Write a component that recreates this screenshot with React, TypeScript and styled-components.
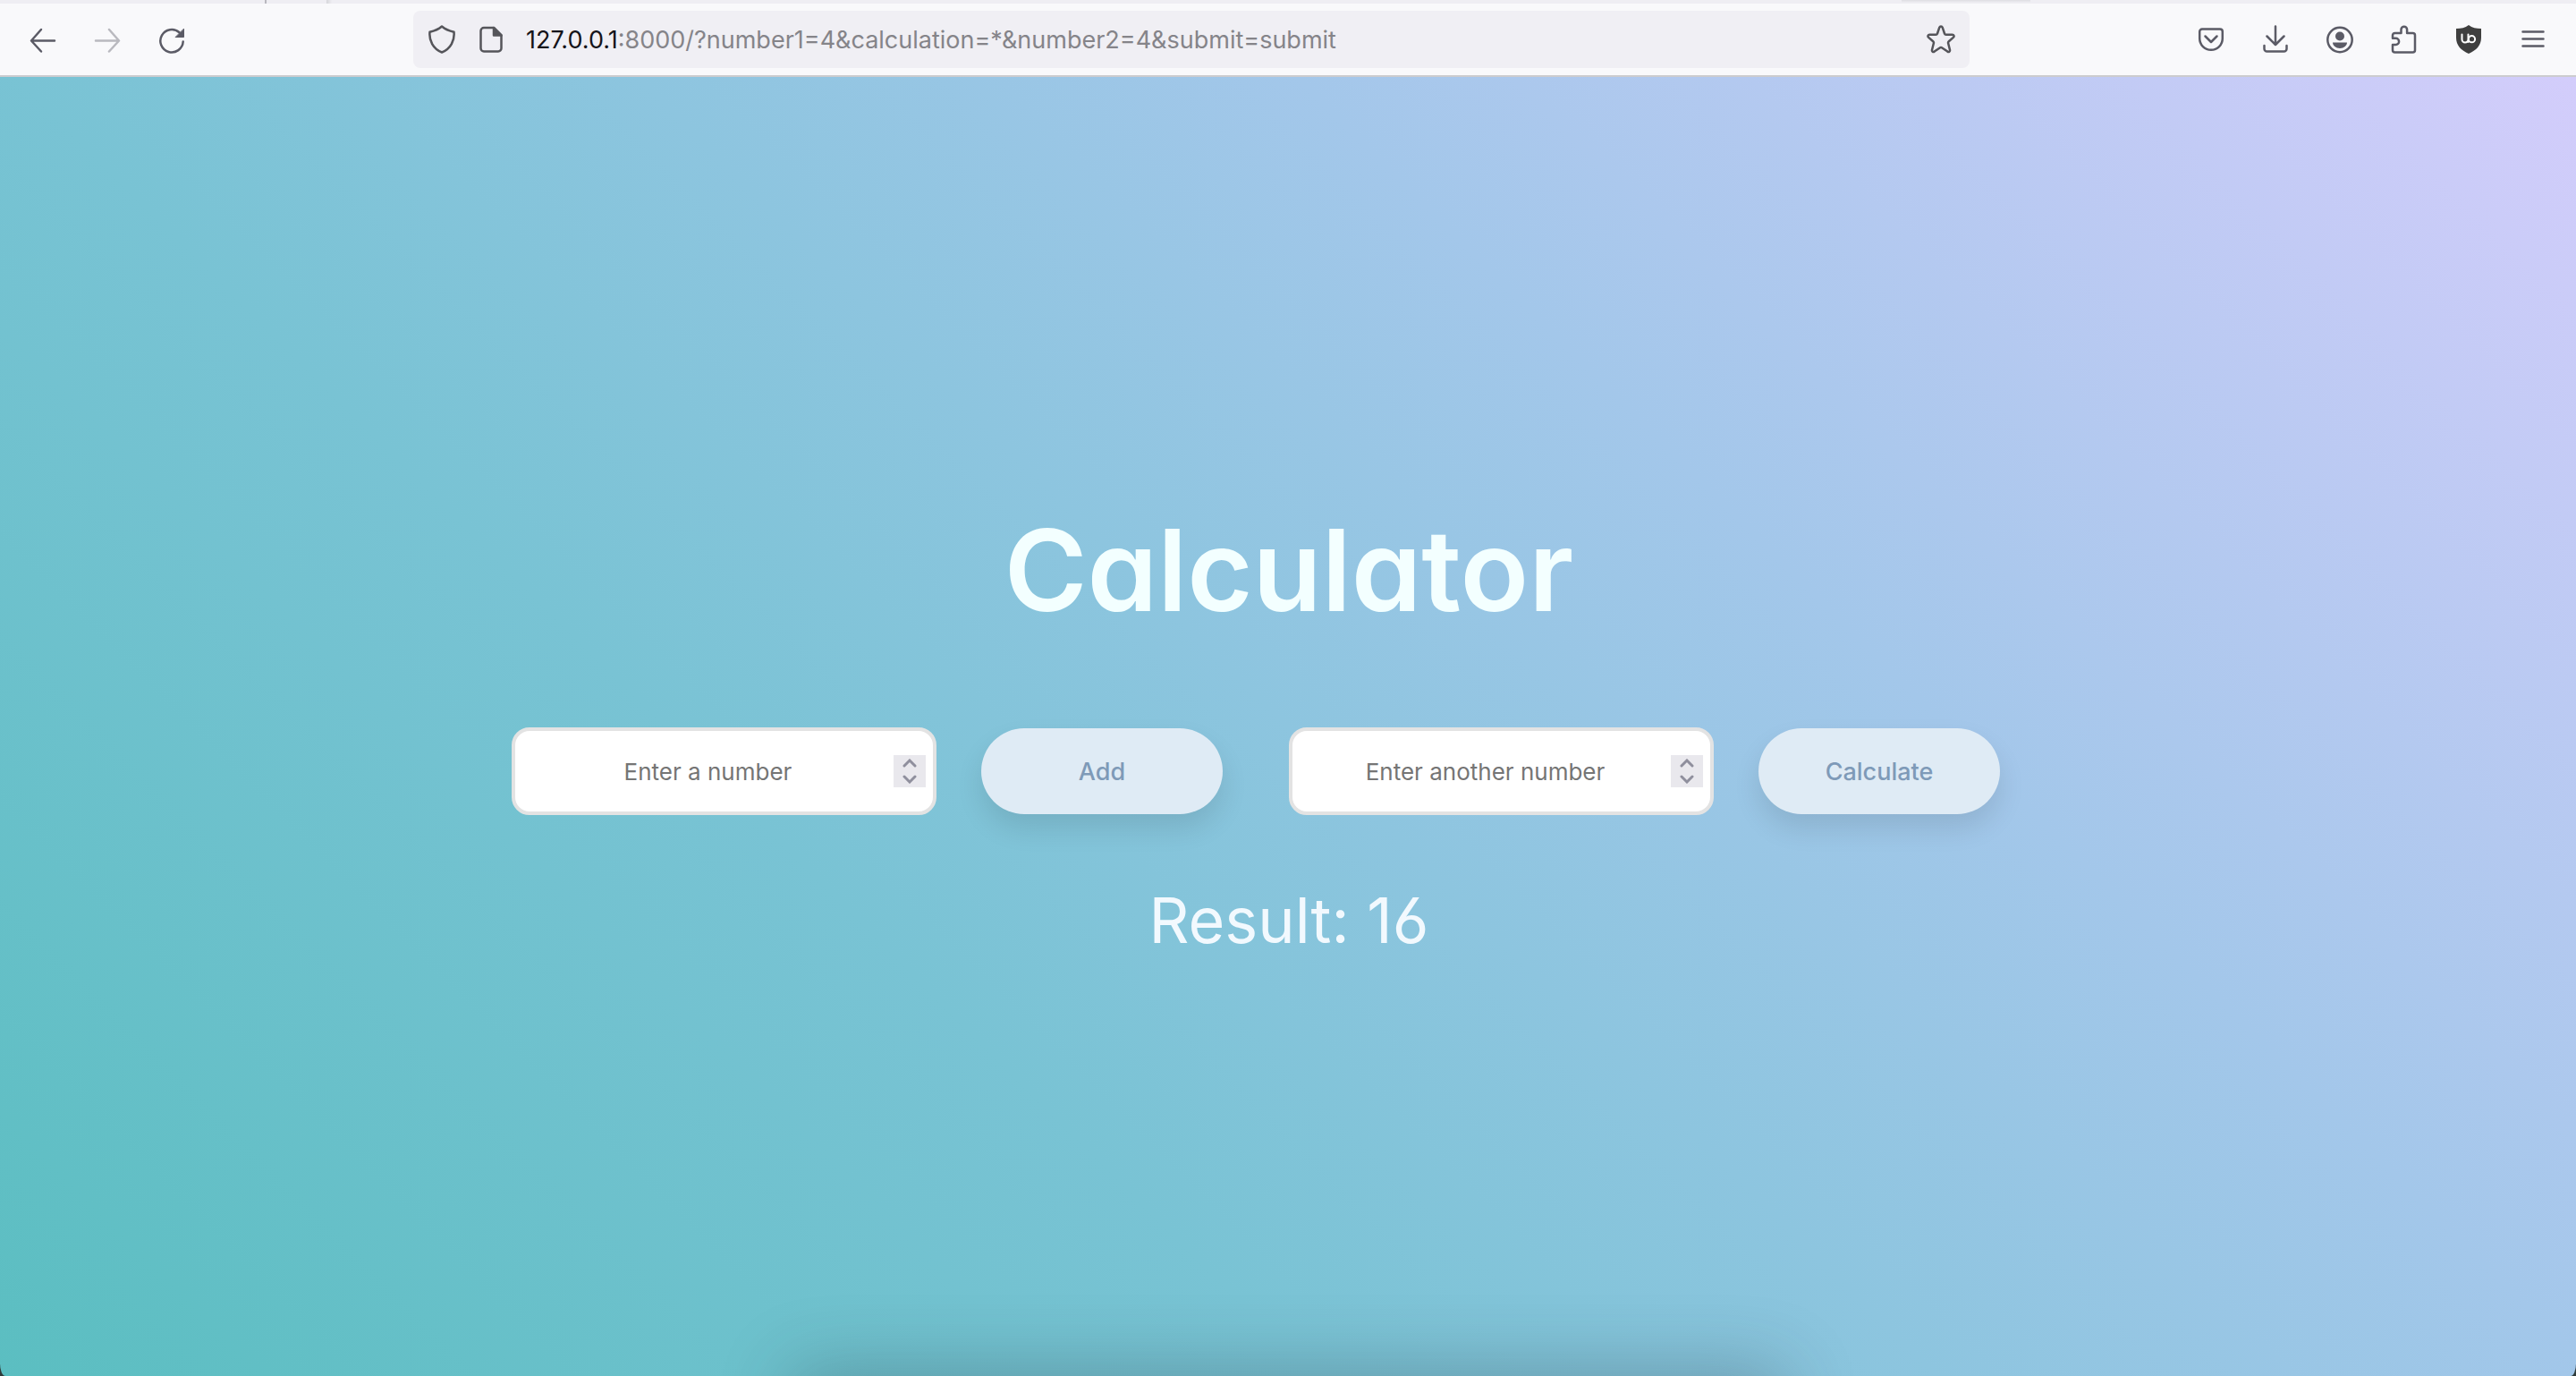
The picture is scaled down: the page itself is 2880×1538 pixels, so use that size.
import React, { useState } from "react";
import styled, { createGlobalStyle, css } from "styled-components";

const GlobalStyle = createGlobalStyle`
  *, *::before, *::after { box-sizing: border-box; }
  html, body { margin: 0; }
  body {
    background: #2f3b3a;
    font-family: Inter, "Liberation Sans", sans-serif;
    font-size: 27px;
  }
`;

const Window = styled.div`
  min-height: 100vh;
  display: flex;
  flex-direction: column;
`;

const TabStrip = styled.div`
  height: 4px;
  display: flex;
  background: #efeef3;
`;

const TabDivider = styled.div`
  width: 2px;
  margin-left: 296px;
  background: #b9b8bf;
`;

const TabEdge = styled.div`
  width: 6px;
  margin-left: 67px;
  background: linear-gradient(to right, #d6d6da, #efeef3);
`;

const TabShadow = styled.div`
  width: 144px;
  height: 3px;
  margin-left: auto;
  margin-right: 610px;
  background: linear-gradient(#dedee2, #efeef3);
`;

const Toolbar = styled.header`
  display: flex;
  align-items: center;
  height: 82px;
  padding: 0 12px;
  background: #f9f9fb;
  border-bottom: 2px solid #cccccf;
`;

const Spacer = styled.div`
  flex: 234 1 0;
`;

const ToolButton = styled.button<{ $faded?: boolean }>`
  display: flex;
  align-items: center;
  justify-content: center;
  width: 72px;
  height: 64px;
  padding: 0;
  border: 0;
  background: none;
  color: #5b5b66;
  opacity: ${(p) => (p.$faded ? 0.4 : 1)};
`;

const Address = styled.div`
  flex: 1708 1 0;
  display: flex;
  align-items: center;
  height: 64px;
  padding: 0 16px;
  border-radius: 8px;
  background: #f0eff4;
  color: #55555a;
`;

const SiteButton = styled.button<{ $last?: boolean }>`
  display: flex;
  padding: 0;
  margin-right: ${(p) => (p.$last ? 0 : 23)}px;
  border: 0;
  background: none;
  color: inherit;
`;

const Host = styled.label`
  color: #15141a;
`;

const Path = styled.input`
  flex: 1;
  min-width: 0;
  padding: 0;
  border: 0;
  outline: 0;
  background: none;
  color: #858489;
  font: inherit;
`;

const Page = styled.main`
  position: relative;
  flex: 1;
  display: flex;
  flex-direction: column;
  align-items: center;
  justify-content: center;
  padding: 6px 0 0 2px;
  overflow: hidden;
  border-radius: 0 0 6px 6px / 0 0 14px 14px;
  background: linear-gradient(45deg, #5bbec1 0%, #79c3d4 34%, #8dc5df 50%, #a3c7ea 67%, #d3cdfb 100%);
`;

const DockShadow = styled.div`
  position: absolute;
  top: 100%;
  left: 31%;
  right: 31%;
  height: 80px;
  box-shadow: 0 0 80px 8px rgba(40, 50, 60, 0.28);
`;

const Title = styled.h1`
  margin: 0 0 56px;
  color: #f3ffff;
  font-size: 126px;
  font-weight: 600;
  line-height: 160px;
  font-feature-settings: "cv11";
`;

const Form = styled.form`
  display: flex;
  flex-wrap: wrap;
  justify-content: center;
  margin: 24px 0;
`;

const Group = styled.div`
  display: flex;
  align-items: center;
  gap: 50px;
  padding: 16px 74px 16px 0;
`;

const Field = styled.div`
  display: flex;
  align-items: center;
  width: 475px;
  height: 98px;
  padding: 0 8px;
  border: 4px solid #e3e3e3;
  border-radius: 20px;
  background: #fff;
`;

const NumberInput = styled.input`
  flex: 1;
  min-width: 0;
  padding: 0;
  border: 0;
  outline: 0;
  background: none;
  color: #222;
  font: inherit;
  font-size: 26px;
  text-align: center;
  appearance: textfield;
  &::placeholder { color: #757575; opacity: 1; }
  &::-webkit-inner-spin-button { appearance: none; margin: 0; }
`;

const Stepper = styled.div`
  display: flex;
  flex-direction: column;
  width: 36px;
  height: 36px;
  background: #e9e8ed;
`;

const StepButton = styled.button`
  flex: 1;
  display: flex;
  align-items: center;
  justify-content: center;
  padding: 0;
  border: 0;
  background: none;
  color: #8f8f9d;
`;

const pill = css`
  width: 270px;
  height: 96px;
  padding: 0;
  border: 0;
  border-radius: 48px;
  background: #dfebf5;
  box-shadow: 0 16px 30px rgba(0, 0, 0, 0.1);
  color: #7e9ab8;
  font-family: inherit;
  font-size: 27px;
  font-weight: 500;
  text-align: center;
`;

const Operation = styled.select`
  ${pill}
  appearance: none;
  text-align-last: center;
`;

const Submit = styled.button`
  ${pill}
`;

const Result = styled.p`
  margin: 34px 0 0;
  color: #f2f9fe;
  font-size: 70px;
  line-height: 88px;
  font-feature-settings: "cv03";
`;

const Icon = ({ children }: { children: React.ReactNode }) => (
  <svg
    width="32"
    height="32"
    viewBox="0 0 32 32"
    fill="none"
    stroke="currentColor"
    strokeWidth="2.5"
    strokeLinecap="round"
    strokeLinejoin="round"
    aria-hidden="true"
  >
    {children}
  </svg>
);

const Chevron = ({ d }: { d: string }) => (
  <svg
    width="16"
    height="10"
    viewBox="0 0 16 10"
    fill="none"
    stroke="currentColor"
    strokeWidth="3"
    strokeLinecap="round"
    aria-hidden="true"
  >
    <path d={d} />
  </svg>
);

const NumberField = ({ name, label }: { name: string; label: string }) => {
  const [value, setValue] = useState("");
  const step = (by: number) => setValue(String(Number(value) + by));
  return (
    <Field>
      <NumberInput
        type="number"
        name={name}
        aria-label={label}
        placeholder={label}
        value={value}
        onChange={(e) => setValue(e.target.value)}
      />
      <Stepper>
        <StepButton type="button" aria-label="Increase" onClick={() => step(1)}>
          <Chevron d="M2 8l6-6 6 6" />
        </StepButton>
        <StepButton type="button" aria-label="Decrease" onClick={() => step(-1)}>
          <Chevron d="M2 2l6 6 6-6" />
        </StepButton>
      </Stepper>
    </Field>
  );
};

export default function App() {
  const [path, setPath] = useState(":8000/?number1=4&calculation=*&number2=4&submit=submit");

  return (
    <>
      <GlobalStyle />
      <Window>
        <TabStrip>
          <TabDivider />
          <TabEdge />
          <TabShadow />
        </TabStrip>
        <Toolbar>
          <ToolButton aria-label="Back">
            <Icon><path d="M29 17.500H3.500M14 5L3 17.500l11 12" /></Icon>
          </ToolButton>
          <ToolButton aria-label="Forward" $faded>
            <Icon><path d="M3 17.500h25.500M18 5l11 12.500-11 12" /></Icon>
          </ToolButton>
          <ToolButton aria-label="Reload">
            <Icon>
              <path d="M28.700 18.500a12.700 12.700 0 1 1-4.200-10.200" />
              <path d="M29.500 4.500v9h-9z" fill="currentColor" strokeWidth="1" />
            </Icon>
          </ToolButton>
          <Spacer />
          <Address>
            <SiteButton aria-label="Tracking protection">
              <Icon><path d="M16 1.500c3.500 3 8 5 13.500 6.200C30.500 17 26 26.500 16 30.500 6 26.500 1.500 17 2.500 7.700 8 6.500 12.500 4.500 16 1.500z" /></Icon>
            </SiteButton>
            <SiteButton aria-label="Site information">
              <Icon>
                <path d="M8 3h11l8.500 8.500V26a3.500 3.500 0 0 1-3.500 3.500H8A3.500 3.500 0 0 1 4.500 26V6.500A3.500 3.500 0 0 1 8 3z" />
                <path d="M19 3v8.500h8.500z" fill="currentColor" />
              </Icon>
            </SiteButton>
            <Host htmlFor="address">127.0.0.1</Host>
            <Path id="address" value={path} onChange={(e) => setPath(e.target.value)} spellCheck={false} />
            <SiteButton aria-label="Bookmark this page" $last>
              <Icon><path d="M16 1.500c.8 0 1.400.4 1.700 1.200L20 9.500c.3.800.9 1.200 1.700 1.200h7c1.800 0 2.500 2 1.100 3.200l-5 4.300c-.7.600-.9 1.300-.7 2.100l1.900 7.400c.4 1.700-1.200 2.900-2.700 1.900l-6-4.200c-.8-.6-1.800-.6-2.600 0l-6 4.200c-1.500 1-3.100-.2-2.700-1.900l1.900-7.400c.2-.8 0-1.500-.7-2.100l-5-4.300c-1.400-1.200-.7-3.200 1.100-3.200h7c.8 0 1.400-.4 1.700-1.200l2.300-6.800c.3-.8.900-1.200 1.700-1.200z" /></Icon>
            </SiteButton>
          </Address>
          <Spacer />
          <ToolButton aria-label="Save to Pocket">
            <Icon>
              <path d="M6 4.500h20A2.800 2.800 0 0 1 28.800 7.300V15a12.800 12.800 0 0 1-25.600 0V7.300A2.800 2.800 0 0 1 6 4.500z" />
              <path d="M9.500 12.500l6.500 6.500 6.500-6.500" />
            </Icon>
          </ToolButton>
          <ToolButton aria-label="Downloads">
            <Icon><path d="M16 1.500v20M6.500 12.500L16 22l9.500-9.500M3.500 23v3.500A3 3 0 0 0 6.500 29.500h19a3 3 0 0 0 3-3V23" /></Icon>
          </ToolButton>
          <ToolButton aria-label="Account">
            <Icon>
              <circle cx="16" cy="16.500" r="13.700" />
              <circle cx="16" cy="12.500" r="5" fill="currentColor" stroke="none" />
              <path d="M8 19.500h16c0 3.500-3.500 6.500-8 6.500s-8-3-8-6.500z" fill="currentColor" stroke="none" />
            </Icon>
          </ToolButton>
          <ToolButton aria-label="Extensions">
            <Icon><path d="M5.500 9h7V5a3.300 3.300 0 0 1 6.600 0v4h6.400a2.500 2.500 0 0 1 2.500 2.500V28a2.500 2.500 0 0 1-2.500 2.500H5.500A2.500 2.500 0 0 1 3 28v-6h3.500a3.600 3.600 0 0 0 0-7.200H3V11.500A2.500 2.500 0 0 1 5.500 9z" /></Icon>
          </ToolButton>
          <ToolButton aria-label="uBlock Origin">
            <Icon>
              <path d="M16 0c4 3 8.500 4 14 4v10c0 9-5.500 14-14 18C7.500 28 2 23 2 14V4c5.500 0 10-1 14-4z" fill="#3f3f3f" stroke="none" />
              <path d="M8.500 10.500v5.500a3.500 3.500 0 0 0 7 0v-5.500M15.500 10.500V19" stroke="#fff" strokeWidth="2" />
              <circle cx="19.500" cy="15.700" r="3.600" stroke="#fff" strokeWidth="2" />
            </Icon>
          </ToolButton>
          <ToolButton aria-label="Menu">
            <Icon><path d="M4.500 7.500h23M4.500 15.500h23M4.500 23.500h23" /></Icon>
          </ToolButton>
        </Toolbar>
        <Page>
          <Title>Calculator</Title>
          <Form onSubmit={(e) => e.preventDefault()}>
            <Group>
              <NumberField name="number1" label="Enter a number" />
              <Operation name="calculation" aria-label="Calculation" defaultValue="+">
                <option value="+">Add</option>
                <option value="-">Subtract</option>
                <option value="*">Multiply</option>
                <option value="/">Divide</option>
              </Operation>
            </Group>
            <Group>
              <NumberField name="number2" label="Enter another number" />
              <Submit type="submit">Calculate</Submit>
            </Group>
          </Form>
          <Result>Result: 16</Result>
          <DockShadow />
        </Page>
      </Window>
    </>
  );
}
